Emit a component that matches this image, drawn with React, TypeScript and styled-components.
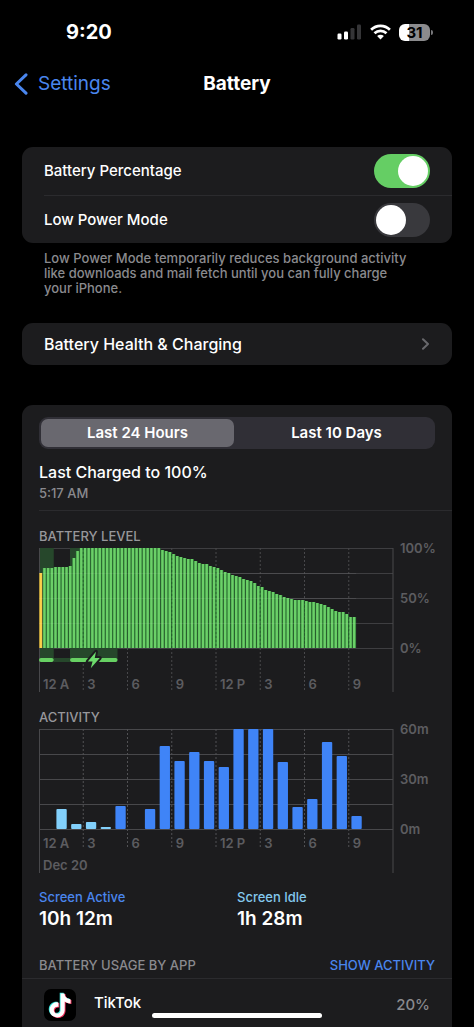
import React, { useState } from 'react';
import styled, { createGlobalStyle } from 'styled-components';

const GlobalStyle = createGlobalStyle`
  *, *::before, *::after { box-sizing: border-box; }
  html, body { margin: 0; background: #000; }
  body {
    font-family: Inter, "Liberation Sans", sans-serif;
    color: #fff;
    -webkit-font-smoothing: antialiased;
  }
  button { font: inherit; border: 0; background: none; padding: 0; cursor: pointer; }
  h1, h2, p, dl, dt, dd, ul { margin: 0; padding: 0; }
`;

const Page = styled.div`
  display: flex;
  flex-direction: column;
  min-height: 100vh;
  overflow-x: hidden;
`;

const StatusBar = styled.div`
  display: flex;
  align-items: center;
  justify-content: space-between;
  height: 64px;
  padding: 0 41px 0 66px;
`;

const Clock = styled.time`
  font-size: 20px;
  line-height: 24px;
  font-weight: 700;
`;

const StatusIcons = styled.div`
  display: flex;
  align-items: center;
  gap: 8px;
`;

const BatteryLevel = styled.div`
  display: flex;
  align-items: center;
  gap: 1px;
`;

const BatteryBody = styled.span`
  width: 31px;
  height: 17px;
  border-radius: 6px;
  background: linear-gradient(to right, #fff 31%, #8b8b8d 31%);
  color: #000;
  font-size: 15px;
  line-height: 17px;
  font-weight: 700;
  text-align: center;
`;

const BatteryNub = styled.span`
  width: 2px;
  height: 5px;
  border-radius: 0 2px 2px 0;
  background: #77777a;
`;

const NavBar = styled.header`
  display: grid;
  grid-template-columns: 1fr auto 1fr;
  align-items: center;
  height: 40px;
  padding: 0 14px;
`;

const BackLink = styled.a`
  display: flex;
  align-items: center;
  gap: 10px;
  color: #4a86ee;
  font-size: 19px;
  line-height: 24px;
  text-decoration: none;
`;

const Title = styled.h1`
  font-size: 19px;
  line-height: 24px;
  font-weight: 700;
`;

const Main = styled.main`
  display: flex;
  flex: 1 0 auto;
  flex-direction: column;
  padding: 43px 22px 0;
`;

const Card = styled.section`
  border-radius: 11px;
  background: #1c1c1e;
`;

const ToggleRow = styled.label`
  display: flex;
  align-items: center;
  justify-content: space-between;
  height: 48px;
  margin-left: 22px;
  padding-right: 22px;
  font-size: 15px;
  line-height: 20px;
  font-weight: 500;

  & + & { border-top: 1px solid #2b2b2e; }
`;

const Switch = styled.input`
  appearance: none;
  display: flex;
  align-items: center;
  width: 56px;
  height: 34px;
  margin: 0;
  padding: 0 2px;
  border-radius: 17px;
  background: #39393d;
  cursor: pointer;

  &::before {
    content: '';
    width: 30px;
    height: 30px;
    border-radius: 50%;
    background: #fff;
  }

  &:checked {
    justify-content: flex-end;
    background: #65ce64;
  }
`;

const Footnote = styled.p`
  padding: 8px 40px 27px 22px;
  color: #8a8a8e;
  font-size: 13px;
  line-height: 15px;
  font-weight: 500;
`;

const LinkCard = styled.a`
  display: flex;
  align-items: center;
  justify-content: space-between;
  height: 42px;
  margin-bottom: 40px;
  padding: 0 22px;
  border-radius: 11px;
  background: #1c1c1e;
  color: #fff;
  font-size: 16px;
  line-height: 20px;
  font-weight: 500;
  text-decoration: none;
`;

const UsageCard = styled(Card)`
  flex: 1 0 auto;
  padding-top: 12px;
  border-radius: 11px 11px 0 0;
`;

const Segments = styled.div`
  display: grid;
  grid-template-columns: 1fr 1fr;
  gap: 6px;
  height: 32px;
  margin: 0 17px;
  padding: 2px;
  border-radius: 9px;
  background: #302f36;
`;

const Segment = styled.button<{ $active: boolean }>`
  border-radius: 7px;
  background: ${(p) => (p.$active ? '#69686f' : 'transparent')};
  color: #fff;
  font-size: 15px;
  line-height: 20px;
  font-weight: 600;
`;

const ChargeSummary = styled.div`
  display: grid;
  gap: 3px;
  margin-left: 17px;
  padding: 13px 0 9px;
  border-bottom: 1px solid #2b2b2e;
`;

const ChargeTitle = styled.h2`
  font-size: 16px;
  line-height: 20px;
  font-weight: 500;
`;

const ChargeTime = styled.p`
  color: #8a8a8e;
  font-size: 13px;
  line-height: 16px;
  font-weight: 500;
`;

const ChartSection = styled.section`
  padding: 17px 17px 0;
`;

const ChartTitle = styled.h2`
  margin-bottom: 4px;
  color: #97979b;
  font-size: 13px;
  line-height: 16px;
  font-weight: 500;
`;

const Chart = styled.div`
  display: grid;
  grid-template-columns: 1fr 42px;
`;

const Plot = styled.svg`
  grid-area: 1 / 1;
  display: block;
  width: 100%;
  height: 144px;
  overflow: visible;
`;

const XLabels = styled.div`
  grid-area: 1 / 1;
  align-self: end;
  display: grid;
  grid-template-columns: repeat(8, 1fr);
  row-gap: 6px;
  color: #5c5c60;
  font-size: 13px;
  line-height: 16px;
  font-weight: 600;
  white-space: nowrap;

  span { padding-left: 4px; }
`;

const DayLabel = styled.span`
  grid-column: 1 / -1;
`;

const YLabels = styled.div`
  grid-area: 1 / 2;
  display: flex;
  flex-direction: column;
  justify-content: space-between;
  height: 116px;
  margin-top: -8px;
  padding-left: 7px;
  color: #5c5c60;
  font-size: 13px;
  line-height: 16px;
  font-weight: 600;
`;

const Totals = styled.dl`
  display: grid;
  grid-template-columns: 1fr 1fr;
  padding: 16px 17px 0;
`;

const TotalName = styled.dt<{ $color: string }>`
  margin-bottom: 2px;
  color: ${(p) => p.$color};
  font-size: 13px;
  line-height: 16px;
  font-weight: 500;
`;

const TotalValue = styled.dd`
  font-size: 19px;
  line-height: 24px;
  font-weight: 600;
`;

const ListHeader = styled.div`
  display: flex;
  justify-content: space-between;
  margin-top: 26px;
  padding: 0 17px 5px;
  border-bottom: 1px solid #2b2b2e;
  font-size: 13px;
  line-height: 16px;
`;

const ListTitle = styled.h2`
  color: #8a8a8e;
  font-size: 13px;
  line-height: 16px;
  font-weight: 500;
`;

const ShowActivity = styled.button`
  color: #4a86ee;
  font-weight: 500;
`;

const AppList = styled.ul`
  list-style: none;
`;

const AppRow = styled.li`
  display: flex;
  align-items: center;
  gap: 18px;
  padding: 10px 22px 6px;
`;

const AppName = styled.span`
  flex: 1;
  padding-bottom: 4px;
  font-size: 15px;
  line-height: 20px;
  font-weight: 500;
`;

const AppShare = styled.span`
  color: #8a8a8e;
  font-size: 15px;
  line-height: 20px;
  font-weight: 500;
`;

const HomeIndicator = styled.div`
  position: fixed;
  bottom: 9px;
  left: 50%;
  width: 170px;
  height: 5px;
  margin-left: -85px;
  border-radius: 3px;
  background: #fff;
`;

const level = [
  75, 80, 80, 80, 81, 81, 81, 81, 82, 90, 97,
  ...Array<number>(22).fill(100),
  98, 97, 96, 94, 92, 91, 90, 89, 89, 87, 85, 84, 84, 82, 81, 80, 78, 76, 75, 73, 72, 71, 69,
  68, 67, 65, 62, 61, 58, 57, 56, 54, 53, 51, 50, 49, 48, 48, 48, 47, 46, 46, 45, 44, 43, 41,
  39, 37, 36, 36, 34, 31, 31,
];

const activity = [
  0, 12, 3, 4, 1, 14, 0, 12, 50, 41, 46, 41, 37, 60, 60, 60, 40, 13, 18, 52, 44, 8,
];

const hours = ['12 A', '3', '6', '9', '12 P', '3', '6', '9'];

const pct = (n: number) => `${n}%`;

function HorizontalRules({ color }: { color: string }) {
  return (
    <>
      {[0, 25, 50, 75, 100].map((y) => (
        <rect key={y} x="0" y={y} width="100%" height="1" fill={color} />
      ))}
    </>
  );
}

function VerticalRules({ length, color }: { length: number; color: string }) {
  return (
    <>
      {[1, 2, 3, 4, 5, 6, 7].map((i) => (
        <line key={i} x1={pct(i * 12.5)} x2={pct(i * 12.5)} y1="0" y2={length}
          stroke={color} strokeDasharray="2 2" />
      ))}
    </>
  );
}

function SideRules() {
  return (
    <>
      <line x1="0.5" x2="0.5" y1="0" y2="144" stroke="#48484b" />
      <line x1="100%" x2="100%" y1="0" y2="144" stroke="#48484b" />
    </>
  );
}

function LevelPlot() {
  const slot = 100 / 96;
  return (
    <Plot role="img" aria-label="Battery level over the last 24 hours">
      <HorizontalRules color="#3e3e41" />
      <VerticalRules length={144} color="#48484b" />
      <rect x="0" y="0" width={pct(slot * 4)} height="112" fill="#26472b" />
      <rect x={pct(slot * 8.4)} y="0" width={pct(slot * 12.9)} height="112" fill="#26472b" />
      <rect x={pct(slot * 4)} y="110" width={pct(slot * 4.4)} height="4" fill="#26472b" />
      <SideRules />
      {level.map((v, i) => (
        <g key={i}>
          <rect x={pct(i * slot)} y={100 - v} width={pct(slot)} height={v}
            fill={i === 0 ? '#7d6a2c' : '#2d7434'} />
          <rect x={pct(i * slot + 0.15)} y={100 - v} width={pct(slot * 0.66)} height={v}
            fill={i === 0 ? '#fbd04b' : '#6bd068'} />
        </g>
      ))}
      {[1, 2, 3, 4, 5, 6, 7].map((i) => (
        <line key={i} x1={pct(i * 12.5)} x2={pct(i * 12.5)} y1={100 - level[i * 12]} y2="100"
          stroke="#1f5a28" strokeOpacity="0.7" strokeDasharray="2 2" />
      ))}
      {[25, 50, 75].map((y) => (
        <rect key={y} x="0" y={y} width={pct(slot * level.length)} height="1" fill="#fff" fillOpacity="0.07" />
      ))}
      <rect x="0" y="110" width={pct(slot * 4)} height="4" rx="2" fill="#67d163" />
      <rect x={pct(slot * 8.4)} y="110" width={pct(slot * 12.9)} height="4" rx="2" fill="#67d163" />
      <svg x={pct(slot * 14.85)} y="112" overflow="visible">
        <path d="M2.2 -8.2 L-6 1.6 H-1.2 L-3 8.2 L6 -2 H1 Z" fill="#6ddb6c" stroke="#1c1c1e"
          strokeWidth="4" strokeLinejoin="round" paintOrder="stroke" />
      </svg>
    </Plot>
  );
}

function ActivityPlot() {
  const slot = 100 / 24;
  return (
    <Plot role="img" aria-label="Activity over the last 24 hours">
      <HorizontalRules color="#48484b" />
      <VerticalRules length={120} color="#515154" />
      <SideRules />
      {activity.map((m, i) => {
        const h = Math.round((m / 60) * 100);
        return m > 0 && (
          <rect key={i} x={pct((i + 0.18) * slot)} y={100 - h} width={pct(slot * 0.7)} height={h}
            rx={Math.min(1, h / 2)} fill={i < 5 ? '#82d0fb' : '#3f84f7'} />
        );
      })}
    </Plot>
  );
}

function SignalIcon() {
  return (
    <svg width="25" height="16" viewBox="0 0 25 16" role="img" aria-label="Signal: 2 of 4 bars">
      <rect x="0.5" y="9.5" width="4" height="6" rx="1.2" fill="#fff" />
      <rect x="7" y="7.5" width="4" height="8" rx="1.2" fill="#fff" />
      <rect x="13.5" y="4" width="4" height="11.5" rx="1.2" fill="#353537" />
      <rect x="20" y="0.5" width="4" height="15" rx="1.2" fill="#353537" />
    </svg>
  );
}

function WifiIcon() {
  return (
    <svg width="21" height="16" viewBox="0 0 21 16" role="img" aria-label="Wi-Fi" fill="none" stroke="#fff">
      <path d="M1.1 5.7 C6.3 0.5 14.7 0.5 19.9 5.7" strokeWidth="2.7" />
      <path d="M4.5 9.3 C7.9 6 13.1 6 16.5 9.3" strokeWidth="2.7" />
      <path d="M7.1 11.9 C9.1 10.2 11.9 10.2 13.9 11.9 L10.5 15.4 Z" fill="#fff" stroke="none" />
    </svg>
  );
}

const notePath =
  'M12.525.02c1.31-.02 2.61-.01 3.91-.02.08 1.53.63 3.09 1.75 4.17 1.12 1.11 2.7 1.62 4.24 1.79v4.03c-1.44-.05-2.89-.35-4.2-.97-.57-.26-1.1-.59-1.62-.93-.01 2.92.01 5.84-.02 8.75-.08 1.4-.54 2.79-1.35 3.94-1.31 1.92-3.58 3.17-5.91 3.21-1.43.08-2.86-.31-4.08-1.03-2.02-1.19-3.44-3.37-3.65-5.71-.02-.5-.03-1-.01-1.49.18-1.9 1.12-3.72 2.58-4.96 1.66-1.44 3.98-2.13 6.15-1.72.02 1.48-.04 2.96-.04 4.44-.99-.32-2.15-.23-3.02.37-.63.41-1.11 1.04-1.36 1.75-.21.51-.15 1.07-.14 1.61.24 1.64 1.82 3.02 3.5 2.87 1.12-.01 2.19-.66 2.77-1.61.19-.33.4-.67.41-1.06.1-1.79.06-3.57.07-5.36.01-4.03-.01-8.05.02-12.07z';

function TikTokIcon() {
  return (
    <svg width="32" height="32" viewBox="0 0 32 32" aria-hidden="true">
      <rect width="32" height="32" rx="7" fill="#000" />
      <path d={notePath} transform="translate(3.2 3.7)" fill="#3ee6df" />
      <path d={notePath} transform="translate(5 5.1)" fill="#f0305a" />
      <path d={notePath} transform="translate(4.1 4.4)" fill="#fff" />
    </svg>
  );
}

export default function App() {
  const [range, setRange] = useState('Last 24 Hours');
  return (
    <Page>
      <GlobalStyle />
      <StatusBar>
        <Clock>9:20</Clock>
        <StatusIcons>
          <SignalIcon />
          <WifiIcon />
          <BatteryLevel>
            <BatteryBody>31</BatteryBody>
            <BatteryNub />
          </BatteryLevel>
        </StatusIcons>
      </StatusBar>
      <NavBar>
        <BackLink href="#settings">
          <svg width="14" height="22" viewBox="0 0 14 22" aria-hidden="true" fill="none" stroke="currentColor"
            strokeWidth="3" strokeLinecap="round" strokeLinejoin="round">
            <path d="M12 1.8 L2.4 11 L12 20.2" />
          </svg>
          Settings
        </BackLink>
        <Title>Battery</Title>
      </NavBar>
      <Main>
        <Card>
          <ToggleRow>
            Battery Percentage
            <Switch type="checkbox" role="switch" defaultChecked />
          </ToggleRow>
          <ToggleRow>
            Low Power Mode
            <Switch type="checkbox" role="switch" />
          </ToggleRow>
        </Card>
        <Footnote>
          Low Power Mode temporarily reduces background activity like downloads and mail fetch until you
          can fully charge your iPhone.
        </Footnote>
        <LinkCard href="#health">
          Battery Health &amp; Charging
          <svg width="9" height="12" viewBox="0 0 9 12" aria-hidden="true" fill="none" stroke="#68686c"
            strokeWidth="2" strokeLinecap="round" strokeLinejoin="round">
            <path d="M2 1.2 L7 6 L2 10.8" />
          </svg>
        </LinkCard>
        <UsageCard>
          <Segments role="tablist">
            {['Last 24 Hours', 'Last 10 Days'].map((name) => (
              <Segment key={name} type="button" role="tab" aria-selected={range === name}
                $active={range === name} onClick={() => setRange(name)}>
                {name}
              </Segment>
            ))}
          </Segments>
          <ChargeSummary>
            <ChargeTitle>Last Charged to 100%</ChargeTitle>
            <ChargeTime>5:17 AM</ChargeTime>
          </ChargeSummary>
          <ChartSection>
            <ChartTitle>BATTERY LEVEL</ChartTitle>
            <Chart>
              <LevelPlot />
              <XLabels>
                {hours.map((h, i) => <span key={i}>{h}</span>)}
              </XLabels>
              <YLabels>
                <span>100%</span>
                <span>50%</span>
                <span>0%</span>
              </YLabels>
            </Chart>
          </ChartSection>
          <ChartSection>
            <ChartTitle>ACTIVITY</ChartTitle>
            <Chart>
              <ActivityPlot />
              <XLabels>
                {hours.map((h, i) => <span key={i}>{h}</span>)}
                <DayLabel>Dec 20</DayLabel>
              </XLabels>
              <YLabels>
                <span>60m</span>
                <span>30m</span>
                <span>0m</span>
              </YLabels>
            </Chart>
          </ChartSection>
          <Totals>
            <div>
              <TotalName $color="#4a86ee">Screen Active</TotalName>
              <TotalValue>10h 12m</TotalValue>
            </div>
            <div>
              <TotalName $color="#84c9ee">Screen Idle</TotalName>
              <TotalValue>1h 28m</TotalValue>
            </div>
          </Totals>
          <ListHeader>
            <ListTitle>BATTERY USAGE BY APP</ListTitle>
            <ShowActivity type="button">SHOW ACTIVITY</ShowActivity>
          </ListHeader>
          <AppList>
            <AppRow>
              <TikTokIcon />
              <AppName>TikTok</AppName>
              <AppShare>20%</AppShare>
            </AppRow>
          </AppList>
        </UsageCard>
      </Main>
      <HomeIndicator />
    </Page>
  );
}
